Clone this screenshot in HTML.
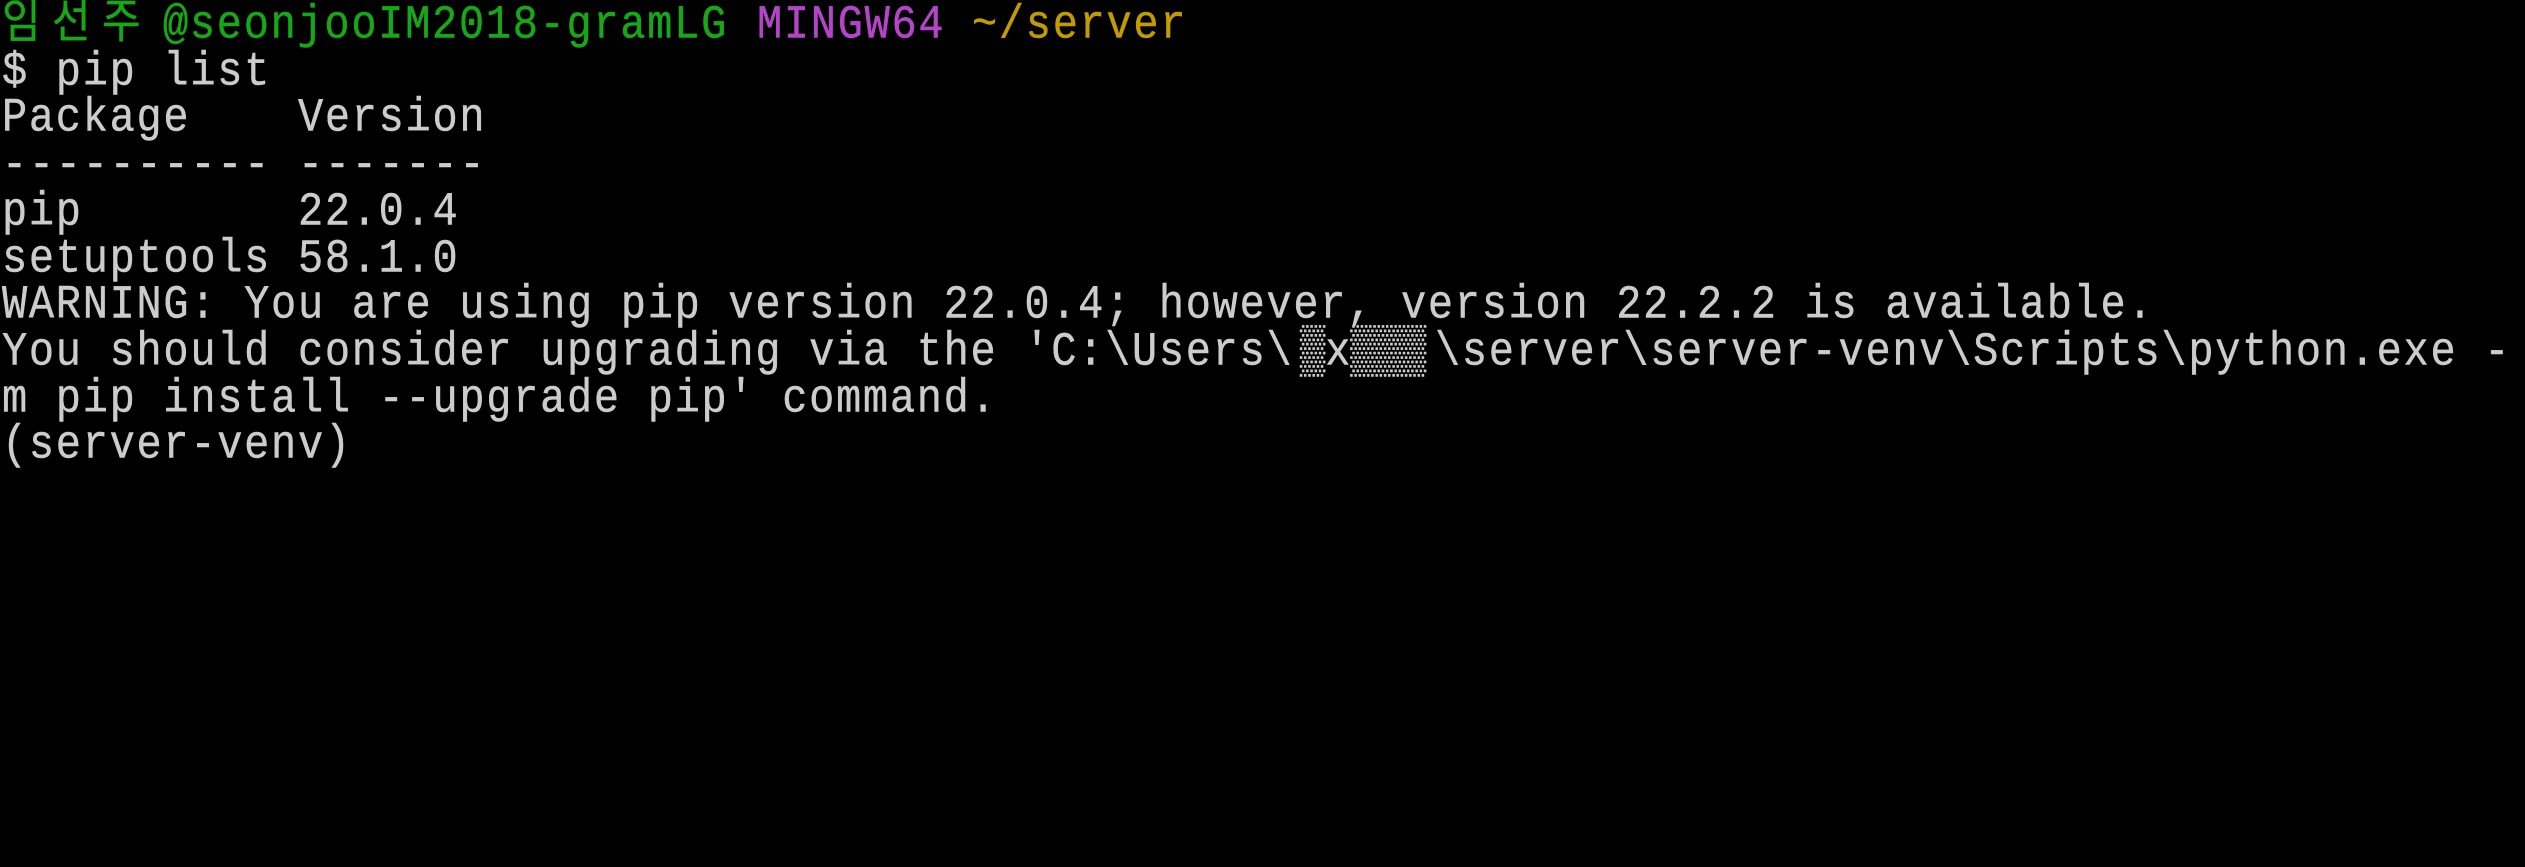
<!DOCTYPE html>
<html><head><meta charset="utf-8"><style>
html,body{margin:0;padding:0;background:#000;width:2525px;height:471px;overflow:hidden}
.t{position:absolute;left:2px;top:3px;font-family:"Liberation Mono","Noto Sans CJK KR",monospace;font-size:42px;letter-spacing:1.7px;color:#cccccc;white-space:pre;-webkit-text-stroke:0.4px currentColor}
.l{position:absolute;height:46.7px;line-height:46.7px;white-space:pre;transform:scaleY(1.12);transform-origin:0 60%}
.g{color:#16a816}.m{color:#b445c8}.y{color:#c19c00}
.sh{color:#cccccc;letter-spacing:0}
</style></head><body>
<div class="t">
<div class="l g" style="top:0;left:0">임</div>
<div class="l g" style="top:0;left:50px">선</div>
<div class="l g" style="top:0;left:100px">주</div>
<div class="l g" style="top:0;left:161px">@seonjooIM2018-gramLG</div>
<div class="l m" style="top:0;left:755px">MINGW64</div>
<div class="l y" style="top:0;left:970px">~/server</div>
<div class="l" style="top:46.7px;left:0">$ pip list</div>
<div class="l" style="top:93.4px;left:0">Package    Version</div>
<div class="l" style="top:140.1px;left:0">---------- -------</div>
<div class="l" style="top:186.8px;left:0">pip        22.0.4</div>
<div class="l" style="top:233.5px;left:0">setuptools 58.1.0</div>
<div class="l" style="top:280.2px;left:0">WARNING: You are using pip version 22.0.4; however, version 22.2.2 is available.</div>
<div class="l" style="top:326.9px;left:0">You should consider upgrading via the 'C:\Users\</div>
<div class="l sh" style="top:326.9px;left:1298px">▒x▒▒▒</div>
<div class="l" style="top:326.9px;left:1433px">\server\server-venv\Scripts\python.exe -</div>
<div class="l" style="top:373.6px;left:0">m pip install --upgrade pip' command.</div>
<div class="l" style="top:420.3px;left:0">(server-venv)</div>
</div>
</body></html>
